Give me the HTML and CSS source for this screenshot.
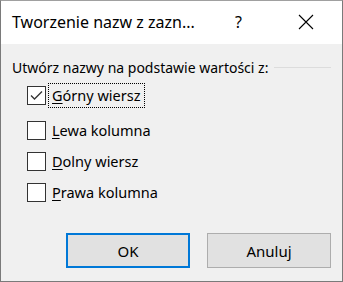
FILE: index.html
```html
<!DOCTYPE html>
<html lang="pl">
<head>
  <meta charset="UTF-8">
  <title>Tworzenie nazw z zaznaczenia</title>
  <link rel="stylesheet" href="styles.css">
</head>
<body>
  <div class="dialog">
    <div class="titlebar">
      <span class="title">Tworzenie nazw z zazn...</span>
      <span class="help">?</span>
      <span class="close">
        <svg width="16" height="16" viewBox="0 0 16 16"><path d="M1 1 L15 15 M15 1 L1 15" stroke="#000" stroke-width="1.1" fill="none"/></svg>
      </span>
    </div>
    <div class="content">
      <div class="group-label">
        <span>Utwórz nazwy na podstawie wartości z:</span>
        <span class="group-line"></span>
      </div>
      <div class="options">
        <label class="option first">
          <span class="box checked">
            <svg width="17" height="17" viewBox="0 0 17 17"><path d="M3 8.5 L6.5 12 L14 4.5" stroke="#333" stroke-width="1.3" fill="none"/></svg>
          </span>
          <span class="text focused"><u>G</u>órny wiersz</span>
        </label>
        <label class="option">
          <span class="box"></span>
          <span class="text"><u>L</u>ewa kolumna</span>
        </label>
        <label class="option">
          <span class="box"></span>
          <span class="text"><u>D</u>olny wiersz</span>
        </label>
        <label class="option">
          <span class="box"></span>
          <span class="text"><u>P</u>rawa kolumna</span>
        </label>
      </div>
      <div class="buttons">
        <button class="btn default">OK</button>
        <button class="btn">Anuluj</button>
      </div>
    </div>
  </div>
</body>
</html>
```

FILE: styles.css
```css
* {
  box-sizing: border-box;
}

body {
  margin: 0;
  font-family: 'Noto Sans', 'Open Sans', sans-serif;
  color: #000;
}

.dialog {
  width: 343px;
  height: 282px;
  background-color: #f0f0f0;
  border: 1px solid #7a7a7a;
  border-top-color: #a0a0a0;
  display: flex;
  flex-direction: column;
}

.titlebar {
  height: 43px;
  background-color: #fff;
  display: flex;
  align-items: center;
  padding-left: 11px;
}

.title {
  font-size: 16px;
  flex: 1;
  padding-bottom: 2px;
}

.help {
  font-size: 16px;
  width: 63px;
  padding-bottom: 2px;
}

.close {
  width: 44px;
  display: flex;
  padding-bottom: 2px;
}

.content {
  flex: 1;
  padding: 14px 11px 0 11px;
  display: flex;
  flex-direction: column;
}

.group-label {
  display: flex;
  align-items: center;
  font-size: 14px;
  line-height: 19px;
}

.group-line {
  flex: 1;
  height: 1px;
  background-color: #dcdcdc;
  margin-left: 6px;
}

.options {
  display: flex;
  flex-direction: column;
  padding-left: 15px;
  padding-top: 9px;
  gap: 12px;
}

.option {
  display: flex;
  align-items: center;
  font-size: 14.5px;
  height: 19px;
}

.option.first {
  margin-bottom: 4px;
}

.box {
  width: 19px;
  height: 19px;
  border: 1px solid #333;
  background-color: #fff;
  display: flex;
  align-items: center;
  justify-content: center;
}

.text {
  margin-left: 5px;
  padding: 0 1px;
  line-height: 19px;
}

.text u {
  text-underline-offset: 2px;
}

.text.focused {
  outline: 1px dotted #000;
  outline-offset: 2px;
}

.buttons {
  display: flex;
  justify-content: flex-end;
  gap: 17px;
  margin-top: auto;
  margin-bottom: 13px;
}

.btn {
  width: 124px;
  height: 35px;
  font-family: 'Noto Sans', 'Open Sans', sans-serif;
  font-size: 15px;
  color: #000;
  background-color: #e1e1e1;
  border: 1px solid #adadad;
  padding: 0;
}

.btn.default {
  border: 2px solid #0078d7;
}
```
